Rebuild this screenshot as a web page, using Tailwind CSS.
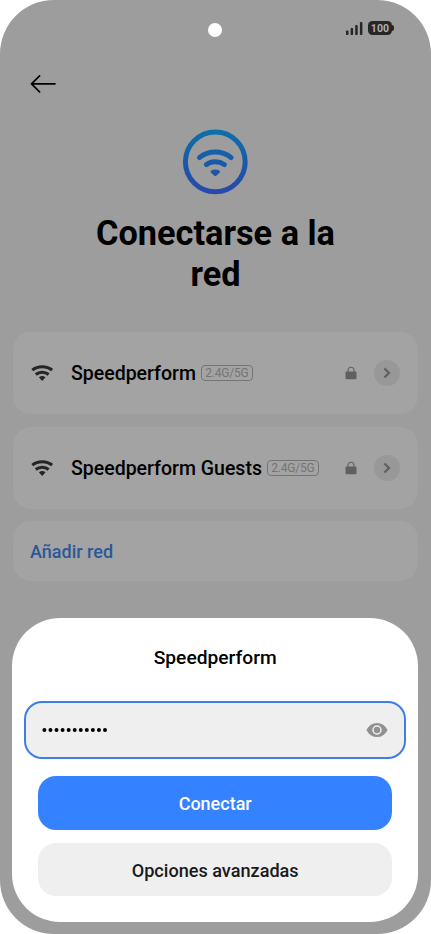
<!DOCTYPE html>
<html lang="es">
<head>
<meta charset="utf-8">
<title>Conectarse a la red</title>
<script src="https://cdn.jsdelivr.net/npm/@tailwindcss/browser@4"></script>
</head>
<body class="bg-white font-[Roboto,sans-serif] font-medium text-black">
<svg width="0" height="0" class="absolute">
  <defs>
    <symbol id="wifi" viewBox="0 0 22 16">
      <g fill="none" stroke="currentColor" stroke-width="3.100">
        <path d="M1.300 5.100Q5.400 1.700 11.200 1.700T21.100 5.100"/>
        <path d="M4.800 9.500Q7.500 7.200 11.200 7.200T17.600 9.500"/>
      </g>
      <path fill="currentColor" d="M7.900 12.200Q11.200 10 14.500 12.200L11.700 15.400Q11.200 15.900 10.700 15.400Z"/>
    </symbol>
    <symbol id="lock" viewBox="0 0 12 14">
      <path d="M3 6V4.200a3 3 0 0 1 6 0V6" fill="none" stroke="currentColor" stroke-width="1.100"/>
      <rect x=".5" y="5.500" width="11" height="7.700" rx="1" fill="currentColor"/>
    </symbol>
    <symbol id="chevron" viewBox="0 0 8 12">
      <path d="M1.400 1.500L6 6L1.400 10.500" fill="none" stroke="currentColor" stroke-width="2.300"/>
    </symbol>
  </defs>
</svg>
<div class="relative flex h-[934px] w-[431px] flex-col overflow-hidden rounded-[54px] bg-[#9d9d9d]">
  <header class="grid h-[60px] grid-cols-3 items-start">
    <span class="col-start-2 mt-[23px] size-[14px] justify-self-center rounded-full bg-white"></span>
    <div class="mt-[21px] mr-[37.500px] flex items-center justify-end gap-[5px]">
      <svg class="h-[14px] w-[18px]" viewBox="0 0 18 14" fill="#272727"><rect x="1" y="9.500" width="2.500" height="4.500" rx=".8"/><rect x="5.600" y="7" width="2.500" height="7" rx=".8"/><rect x="10.200" y="4" width="2.500" height="10" rx=".8"/><rect x="14.900" y="1" width="2.500" height="13" rx=".8"/></svg>
      <div class="flex items-center">
        <span class="flex h-[14px] w-[24px] items-center justify-center rounded-[4.500px] bg-[#272727] pt-[2px] text-[10.500px] leading-none font-bold tracking-[.2px] text-[#b0b0b0]">100</span>
        <span class="h-[6px] w-[1.500px] rounded-r-full bg-[#272727]"></span>
      </div>
    </div>
  </header>
  <div class="pl-[30px]">
    <svg class="mt-[14px] h-[20px] w-[27px]" viewBox="0 0 27 20" fill="none" stroke="#000" stroke-width="1.700" stroke-linecap="round" stroke-linejoin="round"><path d="M25 9.800H1.500M9.600 1.800L1.500 9.800L9.600 17.800"/></svg>
  </div>
  <section class="flex flex-col items-center pt-[34px]">
    <svg class="size-[67px]" viewBox="0 0 67 67">
      <defs><linearGradient id="ring" gradientUnits="userSpaceOnUse" x1="33" y1="1" x2="33" y2="66"><stop offset="0" stop-color="#0c70ac"/><stop offset=".5" stop-color="#195aa8"/><stop offset="1" stop-color="#2947ac"/></linearGradient></defs>
      <g transform="translate(0 .500)">
        <circle cx="33.300" cy="33.300" r="29.900" fill="none" stroke="url(#ring)" stroke-width="5"/>
        <g fill="none" stroke="url(#ring)" stroke-width="5" stroke-linecap="round">
          <path d="M17.500 29Q24.500 23.600 33.300 23.600T49.100 29"/>
          <path d="M24.500 36Q28.300 33.300 33.300 33.300T42.300 36"/>
        </g>
        <path d="M28.900 42.300Q33.300 39.800 37.700 42.300Q38.300 43.500 37.300 44.500L34.500 47Q33.300 48 32.100 47L29.300 44.500Q28.300 43.500 28.900 42.300Z" fill="url(#ring)"/>
      </g>
    </svg>
    <h1 class="mt-[18px] w-[270px] text-center text-[34.300px] leading-[40.500px] font-bold">Conectarse a la red</h1>
  </section>
  <ul class="mx-[13px] mt-[38px] flex flex-col gap-[12.500px]">
    <li class="flex h-[82px] items-center rounded-[18px] bg-[#a3a3a3] pr-[18px] pl-[18px]">
      <svg class="h-[16px] w-[22px] text-[#252525]"><use href="#wifi"/></svg>
      <span class="ml-[18px] pt-[2px] text-[19.500px]">Speedperform</span>
      <span class="ml-[5px] flex h-[16px] w-[52px] items-center justify-center rounded-[4px] border border-[#747474] text-[12px] font-normal tracking-[-.2px] text-[#747474]">2.4G/5G</span>
      <svg class="ml-auto h-[14px] w-[12px] text-[#606060]"><use href="#lock"/></svg>
      <span class="ml-[17px] flex size-[26px] items-center justify-center rounded-full bg-[#989898]"><svg class="h-[12px] w-[8px] text-[#616161]"><use href="#chevron"/></svg></span>
    </li>
    <li class="flex h-[82px] items-center rounded-[18px] bg-[#a3a3a3] pr-[18px] pl-[18px]">
      <svg class="h-[16px] w-[22px] text-[#252525]"><use href="#wifi"/></svg>
      <span class="ml-[18px] pt-[2px] text-[19.500px]">Speedperform Guests</span>
      <span class="ml-[5px] flex h-[16px] w-[52px] items-center justify-center rounded-[4px] border border-[#747474] text-[12px] font-normal tracking-[-.2px] text-[#747474]">2.4G/5G</span>
      <svg class="ml-auto h-[14px] w-[12px] text-[#606060]"><use href="#lock"/></svg>
      <span class="ml-[17px] flex size-[26px] items-center justify-center rounded-full bg-[#989898]"><svg class="h-[12px] w-[8px] text-[#616161]"><use href="#chevron"/></svg></span>
    </li>
    <li class="flex h-[60px] items-center rounded-[18px] bg-[#a3a3a3] pl-[17px] text-[18px] text-[#2a5899]">Añadir red</li>
  </ul>
  <section class="absolute right-[13px] bottom-[12px] left-[12.400px] flex h-[304.500px] flex-col items-center rounded-[48px] bg-white pt-[27px]">
    <h2 class="text-[19.200px] leading-[26px]">Speedperform</h2>
    <div class="mt-[30.500px] flex h-[57.500px] w-[382px] items-center justify-between rounded-[18px] border-2 border-[#3e7fe3] bg-[#efefef] pr-[16px] pl-[15px]">
      <svg class="h-[6px] w-[68px]" viewBox="0 0 68 6"><path d="M3.400 3H65" stroke="#000" stroke-width="4" stroke-linecap="round" stroke-dasharray="0 6.060"/></svg>
      <svg class="h-[16px] w-[22px]" viewBox="0 0 22 16"><path d="M.4 8Q4 .9 11 .9T21.600 8Q18 15.100 11 15.100T.4 8Z" fill="#919191"/><circle cx="11" cy="8" r="4" fill="#919191" stroke="#efefef" stroke-width="1.500"/></svg>
    </div>
    <button class="mt-[17.500px] h-[53.500px] w-[354.500px] shrink-0 rounded-[18px] bg-[#3482ff] pt-[2px] text-[18px] text-white">Conectar</button>
    <button class="mt-[13px] h-[53px] w-[354.500px] shrink-0 rounded-[18px] bg-[#efefef] pt-[3px] text-[18.100px] text-[#1a1a1a]">Opciones avanzadas</button>
  </section>
</div>
</body>
</html>
